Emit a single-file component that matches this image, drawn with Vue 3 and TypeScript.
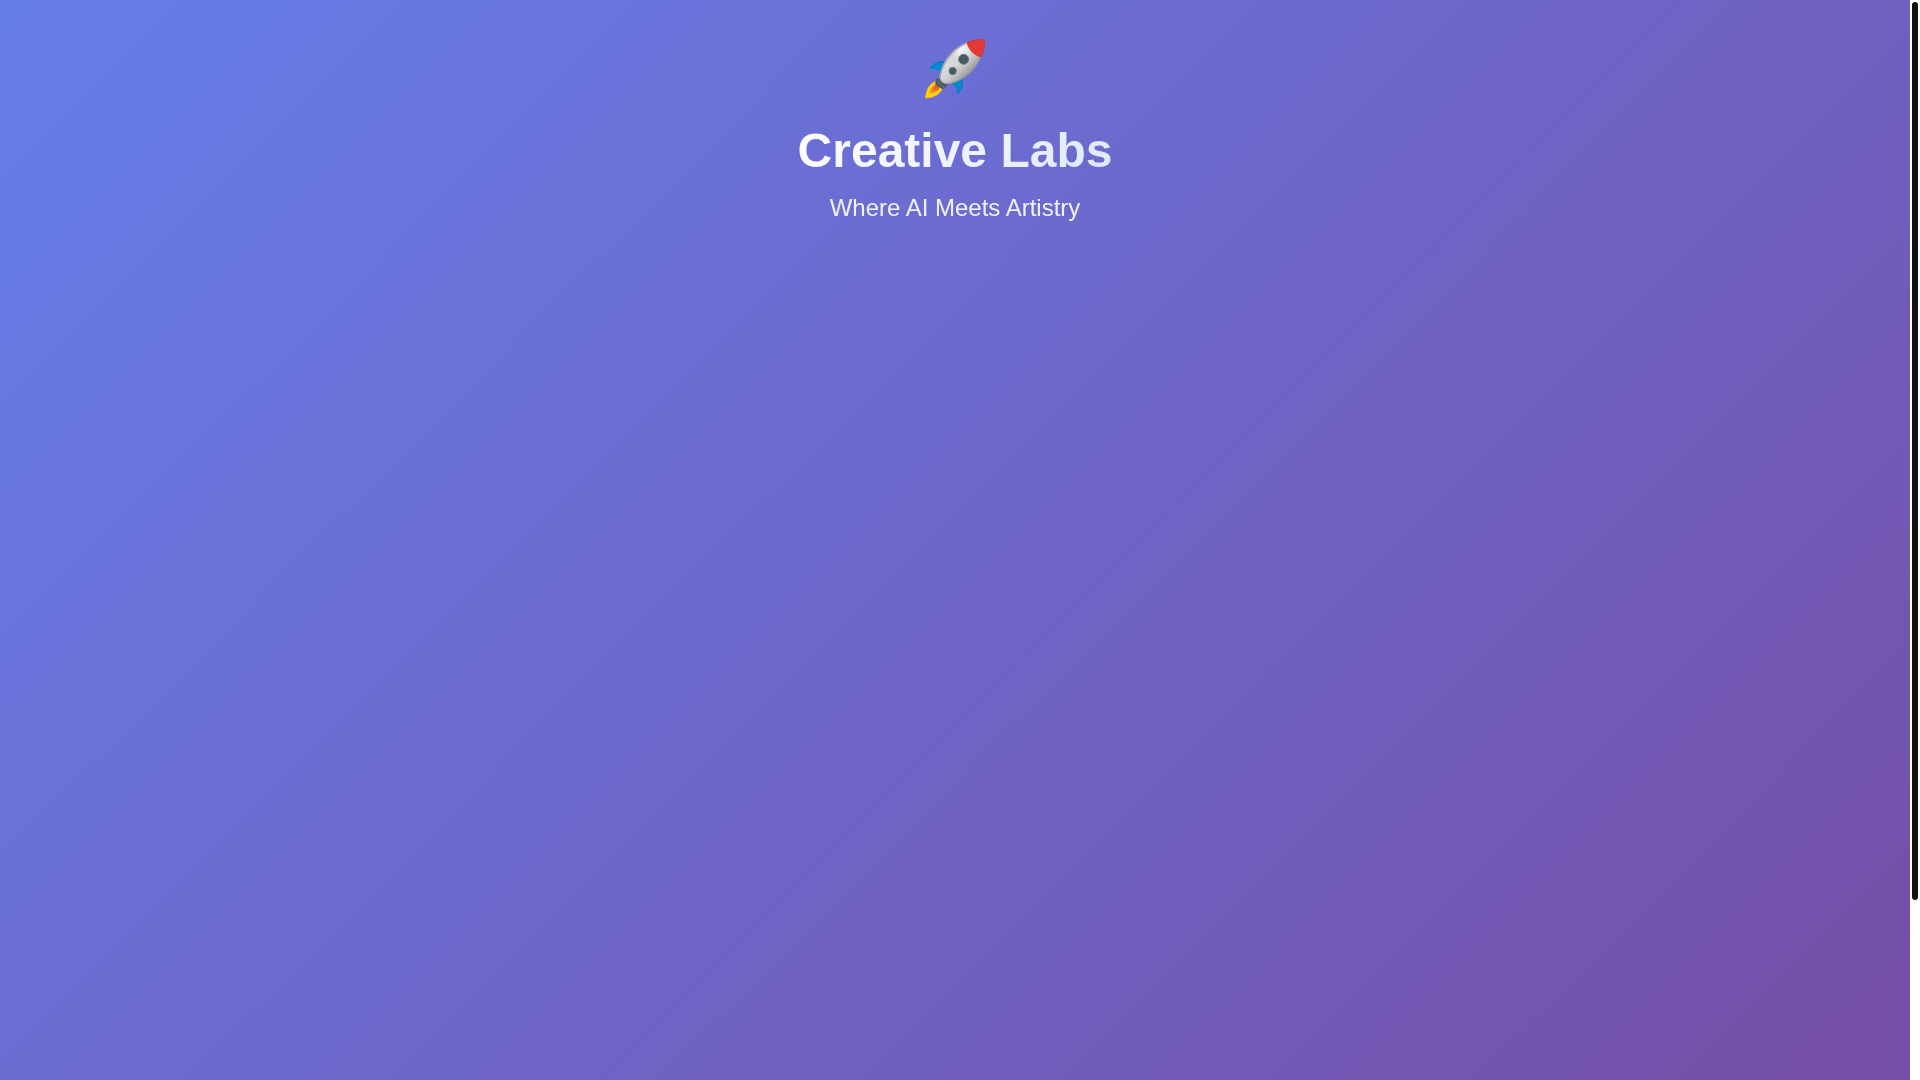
<script setup lang="ts">
const title: string = 'Creative Labs'
const tagline: string = 'Where AI Meets Artistry'
</script>

<template>
  <div class="page">
    <main class="content">
      <header class="hero">
        <svg class="rocket" viewBox="69 48 192 192" role="img" aria-label="Rocket">
          <defs>
            <linearGradient id="hull" gradientUnits="userSpaceOnUse" x1="146" y1="98" x2="204" y2="158">
              <stop offset="0" stop-color="#bcbcbe" />
              <stop offset="0.25" stop-color="#dadadb" />
              <stop offset="0.5" stop-color="#d6d6d7" />
              <stop offset="0.75" stop-color="#c2c2c3" />
              <stop offset="1" stop-color="#a0a0a2" />
            </linearGradient>
            <radialGradient id="flame" gradientUnits="userSpaceOnUse" cx="112" cy="198" r="32">
              <stop offset="0" stop-color="#e2502f" />
              <stop offset="0.5" stop-color="#ee7a29" />
              <stop offset="1" stop-color="#fbb41a" />
            </radialGradient>
            <radialGradient id="shine" gradientUnits="userSpaceOnUse" cx="186" cy="88" r="34">
              <stop offset="0" stop-color="#ffffff" stop-opacity="0.8" />
              <stop offset="1" stop-color="#ffffff" stop-opacity="0" />
            </radialGradient>
          </defs>
          <path fill="#0288d1" d="M87 147C98 129 117 121 138 124L121 158C116 149 104 145 87 147Z" />
          <path fill="none" stroke="#1673b5" stroke-width="3" d="M90 145C101 130 118 123 136 125" />
          <path fill="#0288d1" d="M188 174C191 196 186 214 171 224C173 208 166 196 153 190Z" />
          <path fill="none" stroke="#1673b5" stroke-width="3" d="M187 177C189 196 185 211 172 221" />
          <path fill="#fdd60a" d="M106 183C86 194 77 211 76 235C99 234 118 225 127 207Z" />
          <path fill="none" stroke="#e0b32b" stroke-width="2" d="M106 184C87 194 78 211 77 234C99 233 117 225 126 207" />
          <path fill="url(#flame)" d="M109 191C95 200 88 210 86 223C100 220 112 214 120 204Z" />
          <path fill="#455a64" d="M115 173C107 179 103 187 107 193C113 199 121 205 128 207C135 207 139 201 141 193Z" />
          <path fill="none" stroke="#5b707a" stroke-width="4" d="M112 180C116 190 123 198 134 203" />
          <path fill="url(#hull)" d="M201 67C163 84 135 111 122 153C117 170 118 179 124 185C131 192 140 194 153 191C193 183 229 148 244 111C236 91 221 77 201 67Z" />
          <path fill="url(#shine)" d="M201 67C163 84 135 111 122 153C117 170 118 179 124 185C131 192 140 194 153 191C193 183 229 148 244 111C236 91 221 77 201 67Z" />
          <path fill="none" stroke="#929398" stroke-width="3" d="M201 69C164 86 137 113 124 154C119 170 120 178 125 183C131 190 140 192 153 189C192 181 226 147 242 111" />
          <path fill="#e53935" d="M200 68C215 59 235 57 253 58C255 60 256 65 255 71C253 88 249 101 243 113C222 106 204 88 200 68Z" />
          <path fill="none" stroke="#c23a3e" stroke-width="3" d="M201 69C215 61 235 59 252 60C254 62 254 66 253 71C251 87 247 100 242 111" />
          <circle cx="191" cy="118" r="15" fill="#455a64" stroke="#6d7c83" stroke-width="3" />
          <circle cx="158" cy="153" r="11" fill="#455a64" stroke="#6d7c83" stroke-width="3" />
        </svg>
        <h1 class="title">{{ title }}</h1>
        <p class="tagline">{{ tagline }}</p>
      </header>
    </main>
    <div class="rail" aria-hidden="true">
      <div class="thumb"></div>
    </div>
  </div>
</template>

<style>
body {
  margin: 0;
}
</style>

<style scoped>
.page {
  display: flex;
  min-height: 100vh;
  font-family: "Liberation Sans", Arial, sans-serif;
}

.content {
  flex: 1;
  background: linear-gradient(135deg, #667eea 0%, #764ba2 100%) no-repeat;
  background-size: 100% 120vh;
}

.hero {
  display: flex;
  flex-direction: column;
  align-items: center;
  padding-top: 36px;
}

.rocket {
  display: block;
  width: 64px;
  height: 64px;
  margin-bottom: 24px;
}

.title {
  margin: 0 0 16px;
  font-size: 48px;
  line-height: 54px;
  font-weight: 700;
  background: linear-gradient(135deg, #ffffff 0%, #e0e7ff 100%);
  background-clip: text;
  -webkit-background-clip: text;
  color: transparent;
}

.tagline {
  margin: 0;
  font-size: 24px;
  line-height: 28px;
  color: #ffffff;
  opacity: 0.9;
}

.rail {
  display: flex;
  box-sizing: border-box;
  width: 10px;
  padding: 2px;
  background: #ffffff;
}

.thumb {
  width: 6px;
  height: calc(83vh + 2px);
  border-radius: 3px;
  background: #111111;
}
</style>
